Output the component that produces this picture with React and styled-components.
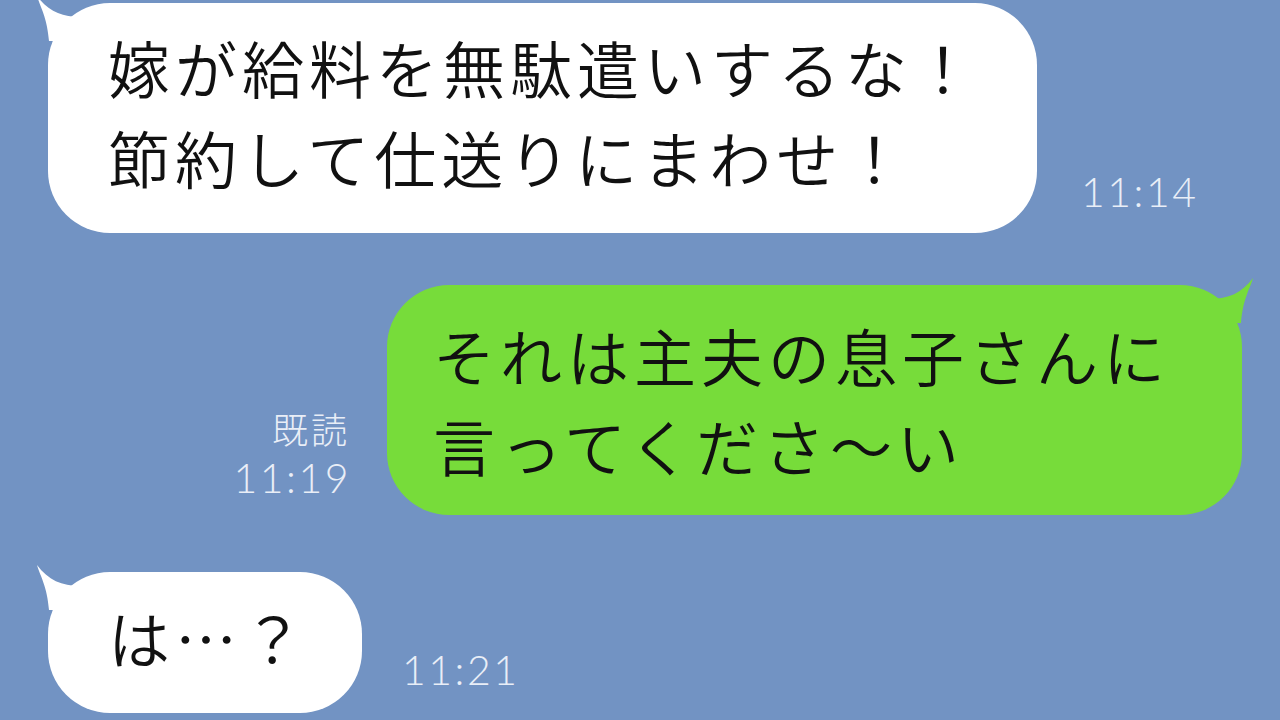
import React from 'react';
import styled, { createGlobalStyle } from 'styled-components';

const GlobalStyle = createGlobalStyle`
  html, body {
    margin: 0;
    padding: 0;
    background: #7293c3;
  }
`;

const Screen = styled.div`
  width: 1280px;
  height: 720px;
  overflow: hidden;
  background: #7293c3;
  box-sizing: border-box;
  padding: 3px 38px 0 48px;
  display: flex;
  flex-direction: column;
  font-family: "Noto Sans CJK JP", "Noto Sans", sans-serif;
`;

const Row = styled.div`
  display: flex;
  align-items: flex-end;
  justify-content: ${p => (p.mine ? 'flex-end' : 'flex-start')};
  gap: ${p => p.gap || 40}px;
  margin-top: ${p => p.top || 0}px;
`;

const Bubble = styled.div`
  position: relative;
  background: ${p => (p.mine ? '#77dc3a' : '#ffffff')};
  border-radius: 62px;
  padding: ${p => p.pad};
  color: #111;
  font-size: 62px;
  line-height: 90px;
  letter-spacing: 5px;
  font-weight: 350;
  white-space: nowrap;
`;

const Tail = styled.svg`
  position: absolute;
  top: -8px;
  ${p => (p.mine ? 'right: -12px; transform: scaleX(-1);' : 'left: -12px;')}
  width: 50px;
  height: 50px;
`;

const Meta = styled.div`
  display: flex;
  flex-direction: column;
  align-items: flex-end;
  color: #e9eef7;
  margin-bottom: ${p => p.bottom || 20}px;
`;

const Read = styled.span`
  font-family: "Noto Sans CJK JP", "Noto Sans", sans-serif;
  font-weight: 300;
  font-size: 36px;
  line-height: 52px;
  letter-spacing: 3px;
`;

const Time = styled.span`
  font-family: Lato, "Liberation Sans", sans-serif;
  font-weight: 300;
  font-size: 41px;
  line-height: 48px;
  letter-spacing: 2.5px;
  margin-right: -1px;
`;

function BubbleTail({ mine, color }) {
  return (
    <Tail mine={mine} viewBox="0 0 50 50">
      <path
        d="M1 1 C 5 14 11 22 13 46 L 44 46 L 44 22 C 26 22 12 16 1 1 Z"
        fill={color}
      />
    </Tail>
  );
}

export default function App() {
  return (
    <>
      <GlobalStyle />
      <Screen>
        <Row gap={44}>
          <Bubble pad="19px 58px 31px 60px">
            <BubbleTail color="#ffffff" />
            嫁が給料を無駄遣いするな！
            <br />
            節約して仕送りにまわせ！
          </Bubble>
          <Meta bottom={17}>
            <Time>11:14</Time>
          </Meta>
        </Row>

        <Row mine gap={37} top={52}>
          <Meta bottom={13}>
            <Read>既読</Read>
            <Time>11:19</Time>
          </Meta>
          <Bubble mine pad="25px 72px 25px 46px">
            <BubbleTail mine color="#77dc3a" />
            それは主夫の息子さんに
            <br />
            言ってくださ〜い
          </Bubble>
        </Row>

        <Row gap={40} top={57}>
          <Bubble pad="20px 53px 31px 60px">
            <BubbleTail color="#ffffff" />
            は…？
          </Bubble>
          <Meta bottom={19}>
            <Time>11:21</Time>
          </Meta>
        </Row>
      </Screen>
    </>
  );
}
